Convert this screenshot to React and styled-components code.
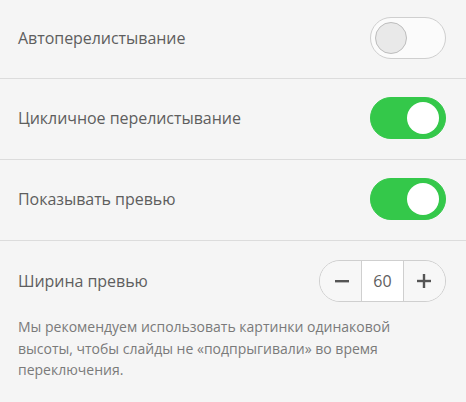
import React, { useState } from "react";
import styled, { createGlobalStyle } from "styled-components";

const Global = createGlobalStyle`
  html, body { margin: 0; padding: 0; background: #f5f5f5; }
  body { font-family: "Open Sans", "Noto Sans", sans-serif; }
`;

const Panel = styled.div`
  width: 466px;
  background: #f5f5f5;
  display: flex;
  flex-direction: column;
`;

const Row = styled.div`
  display: flex;
  align-items: center;
  justify-content: space-between;
  padding: ${(p) =>
    p.$first ? "17px 20px 19px 18px" : p.$last ? "19px 20px 14px 18px" : "18px 20px 20px 18px"};
  border-bottom: ${(p) => (p.$last ? "none" : "1px solid #dcdcdc")};
`;

const Label = styled.span`
  font-size: 16px;
  color: #5e5e5e;
  letter-spacing: -0.05px;
`;

const Track = styled.button`
  width: 76px;
  height: 42px;
  border-radius: 21px;
  box-sizing: border-box;
  padding: 0;
  cursor: pointer;
  position: relative;
  border: 1px solid ${(p) => (p.$on ? "#34c84a" : "#cfcfcf")};
  background: ${(p) => (p.$on ? "#34c84a" : "#fbfbfb")};
`;

const Knob = styled.span`
  position: absolute;
  top: 4px;
  left: ${(p) => (p.$on ? "36px" : "4px")};
  width: 32px;
  height: 32px;
  border-radius: 50%;
  box-sizing: border-box;
  background: ${(p) => (p.$on ? "#fff" : "#e9e9e9")};
  border: ${(p) => (p.$on ? "none" : "1px solid #bdbdbd")};
`;

const Toggle = ({ initial }) => {
  const [on, setOn] = useState(initial);
  return (
    <Track $on={on} onClick={() => setOn(!on)}>
      <Knob $on={on} />
    </Track>
  );
};

const Stepper = styled.div`
  display: flex;
  height: 42px;
  box-sizing: border-box;
  border: 1px solid #cfcfcf;
  border-radius: 21px;
  overflow: hidden;
`;

const StepBtn = styled.button`
  width: 41px;
  height: 100%;
  border: none;
  background: #f7f7f7;
  padding: 0;
  display: flex;
  align-items: center;
  justify-content: center;
  cursor: pointer;
  ${(p) => (p.$left ? "padding-left: 2px;" : "padding-right: 2px;")}
`;

const StepValue = styled.div`
  width: 43px;
  height: 100%;
  box-sizing: border-box;
  border-left: 1px solid #cfcfcf;
  border-right: 1px solid #cfcfcf;
  background: #fff;
  display: flex;
  align-items: center;
  justify-content: center;
  font-size: 16px;
  color: #5e5e5e;
`;

const Hint = styled.p`
  margin: 0;
  padding: 0 20px 0 18px;
  font-size: 14px;
  line-height: 21.5px;
  color: #7a7a7a;
`;

export default function App() {
  const [width, setWidth] = useState(60);
  return (
    <Panel>
      <Global />
      <Row $first>
        <Label>Автоперелистывание</Label>
        <Toggle initial={false} />
      </Row>
      <Row>
        <Label>Цикличное перелистывание</Label>
        <Toggle initial={true} />
      </Row>
      <Row>
        <Label>Показывать превью</Label>
        <Toggle initial={true} />
      </Row>
      <Row $last>
        <Label>Ширина превью</Label>
        <Stepper>
          <StepBtn $left onClick={() => setWidth(width - 1)}>
            <svg width="14" height="14" viewBox="0 0 14 14">
              <rect x="0" y="6" width="14" height="2.4" fill="#555" />
            </svg>
          </StepBtn>
          <StepValue>{width}</StepValue>
          <StepBtn onClick={() => setWidth(width + 1)}>
            <svg width="14" height="14" viewBox="0 0 14 14">
              <rect x="0" y="5.8" width="14" height="2.4" fill="#555" />
              <rect x="5.8" y="0" width="2.4" height="14" fill="#555" />
            </svg>
          </StepBtn>
        </Stepper>
      </Row>
      <Hint>
        Мы рекомендуем использовать картинки одинаковой высоты, чтобы слайды не «подпрыгивали» во время переключения.
      </Hint>
    </Panel>
  );
}
